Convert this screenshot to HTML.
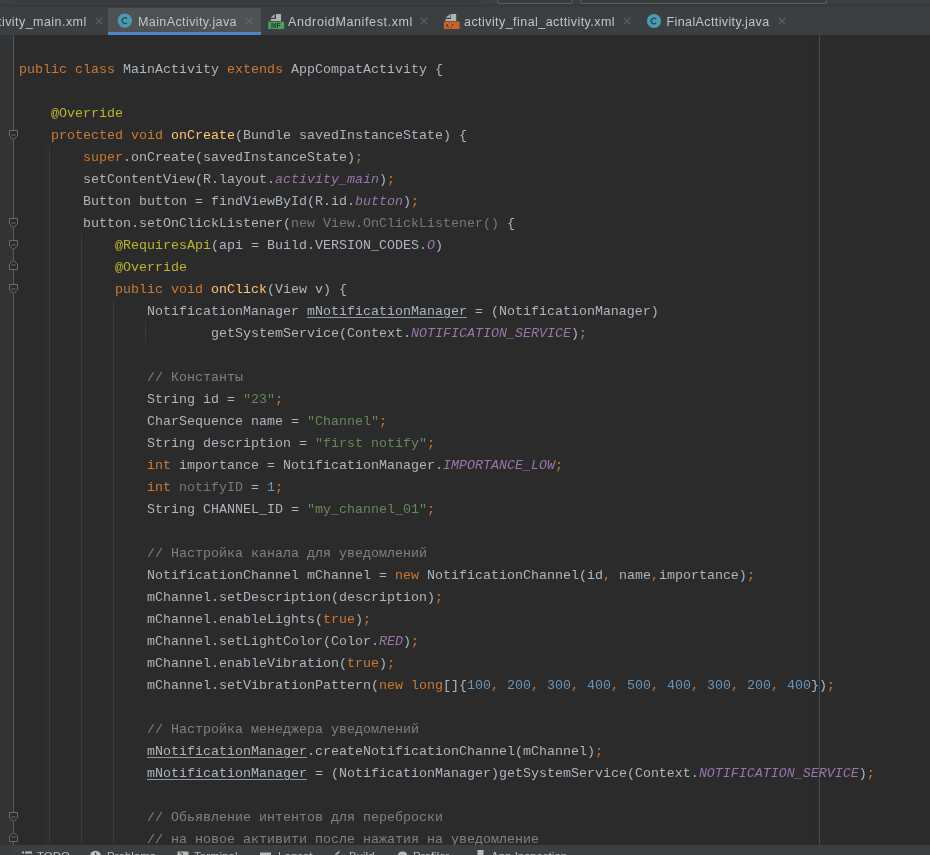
<!DOCTYPE html>
<html><head><meta charset="utf-8">
<style>
html,body{margin:0;padding:0;}
body{width:930px;height:855px;overflow:hidden;position:relative;-webkit-font-smoothing:antialiased;background:#2b2b2b;font-family:"Liberation Sans",sans-serif;}
.abs{position:absolute;}
#topstrip{left:0;top:0;width:930px;height:8px;background:#3c3f41;}
#tabbar{left:0;top:8px;width:930px;height:27px;background:#3c3f41;}
#tabline{left:0;top:34px;width:930px;height:1px;background:#323232;}
.tab{position:absolute;top:8px;height:27px;}
.tab.active{background:#4e5254;}
.tt{position:absolute;top:14.5px;font-size:12.5px;color:#c4c4c4;white-space:pre;line-height:14px;}
.x{position:absolute;top:17px;width:7px;height:7px;}
#gutter{left:0;top:35px;width:13px;height:810px;background:#313335;}
.vl{position:absolute;width:1px;}
.ln{position:absolute;left:19px;height:22px;line-height:22px;font-family:"Liberation Mono",monospace;font-size:13.333px;white-space:pre;color:#adb5be;}
.k{color:#cc7832}.a{color:#bbb529}.f{color:#ffc66d}.d{color:#adb5be}.s{color:#6a8759}.n{color:#6897bb}.c{color:#808080}.p{color:#9876aa;font-style:italic}.g{color:#787878}.u{color:#adb5be;text-decoration:underline;text-decoration-color:#8f979f;text-underline-offset:2px;}
#bottombar{left:0;top:845px;width:930px;height:10px;background:#3c3f41;}
.bt{position:absolute;top:849px;font-size:11.5px;color:#bbbbbb;white-space:pre;line-height:14px;}
.fold{position:absolute;left:9px;width:9px;height:10px;}
</style></head><body><div id="root" style="position:absolute;left:0;top:0;width:930px;height:855px;overflow:hidden;will-change:transform;">
<div id="topstrip" class="abs"></div>
<div class="abs" style="left:497px;top:-7px;width:76px;height:11px;border:1px solid #5a5c5e;border-radius:2px;box-sizing:border-box;"></div>
<div class="abs" style="left:580px;top:-7px;width:247px;height:11px;border:1px solid #5a5c5e;border-radius:2px;box-sizing:border-box;"></div>
<div class="abs" style="left:13px;top:0;width:470px;height:3px;background:#383a3c;"></div>
<div class="abs" style="left:500px;top:0;width:70px;height:3px;background:#393b3d;"></div>
<div class="abs" style="left:584px;top:0;width:240px;height:3px;background:#393b3d;"></div>
<div class="abs" style="left:0;top:4px;width:930px;height:3px;background:#37393b;"></div>
<div id="tabbar" class="abs"></div>
<!-- tabs -->
<div class="tab active" style="left:108px;width:153px;"></div>
<div class="abs" style="left:108px;top:32px;width:153px;height:3px;background:#4a88c7;"></div>
<div class="tt" style="left:-2px;letter-spacing:0.45px">tivity_main.xml</div>
<div class="tt" style="left:138px;letter-spacing:0.4px">MainActivity.java</div>
<div class="tt" style="left:288px;letter-spacing:0.62px">AndroidManifest.xml</div>
<div class="tt" style="left:464px;letter-spacing:0.44px">activity_final_acttivity.xml</div>
<div class="tt" style="left:666.5px;letter-spacing:0.39px">FinalActtivity.java</div>
<svg class="abs" style="left:94.5px;top:16.8px" width="8" height="8" viewBox="0 0 8 8"><path d="M0.6 0.6L7.4 7.4M7.4 0.6L0.6 7.4" stroke="#5e6062" stroke-width="1.15"/></svg>
<svg class="abs" style="left:245px;top:16.8px" width="8" height="8" viewBox="0 0 8 8"><path d="M0.6 0.6L7.4 7.4M7.4 0.6L0.6 7.4" stroke="#66686a" stroke-width="1.15"/></svg>
<svg class="abs" style="left:420px;top:16.8px" width="8" height="8" viewBox="0 0 8 8"><path d="M0.6 0.6L7.4 7.4M7.4 0.6L0.6 7.4" stroke="#5e6062" stroke-width="1.15"/></svg>
<svg class="abs" style="left:623px;top:16.8px" width="8" height="8" viewBox="0 0 8 8"><path d="M0.6 0.6L7.4 7.4M7.4 0.6L0.6 7.4" stroke="#5e6062" stroke-width="1.15"/></svg>
<svg class="abs" style="left:777.5px;top:16.8px" width="8" height="8" viewBox="0 0 8 8"><path d="M0.6 0.6L7.4 7.4M7.4 0.6L0.6 7.4" stroke="#5e6062" stroke-width="1.15"/></svg>
<!-- C icons -->
<svg class="abs" style="left:117px;top:13px" width="16" height="16" viewBox="0 0 16 16"><circle cx="7.9" cy="7.6" r="7.2" fill="#4a9ab0"/><path d="M10 5.6A2.8 2.9 0 1 0 10 9.6" fill="none" stroke="#264a5c" stroke-width="1.3"/></svg>
<svg class="abs" style="left:646px;top:13px" width="16" height="16" viewBox="0 0 16 16"><circle cx="8" cy="8" r="7.1" fill="#4a9ab0"/><path d="M10.1 6A2.8 2.9 0 1 0 10.1 10" fill="none" stroke="#264a5c" stroke-width="1.3"/></svg>
<!-- MF icon -->
<svg class="abs" style="left:268px;top:13px" width="17" height="17" viewBox="0 0 17 17">
<path d="M6.6 0.9V4.8H2.7Z" fill="#aeb2b6"/><path d="M8 0.9H13.05V7.9H2.7V5.95H8Z" fill="#aeb2b6"/>
<rect x="0.2" y="8.7" width="15.9" height="7.3" fill="#4c9d5e"/>
<text x="3" y="14.9" font-family="Liberation Sans" font-weight="bold" font-size="6.6" fill="#1d3a22">MF</text>
</svg>
<!-- XML icon -->
<svg class="abs" style="left:443px;top:13px" width="17" height="17" viewBox="0 0 17 17">
<path d="M7.3 0.9V4.8H2.6Z" fill="#aeb2b6"/><path d="M7.9 0.9H13.2V7.9H2.6V5.95H7.9Z" fill="#aeb2b6"/>
<rect x="0.9" y="8.5" width="15.7" height="7.5" fill="#c7632c"/>
<path d="M5.1 11.3L3.2 12.5L5.6 14.6M9.6 11V12.6M8.2 14.3V14.8" fill="none" stroke="#3a1a0a" stroke-width="0.9"/>
</svg>
<div id="gutter" class="abs"></div>
<div class="vl" style="left:13px;top:35px;height:810px;background:#555759;"></div>
<div class="vl" style="left:46px;top:145px;height:700px;background:#333333;"></div>
<div class="vl" style="left:49px;top:145px;height:700px;background:#393939;"></div>
<div class="vl" style="left:81px;top:233px;height:612px;background:#393939;"></div>
<div class="vl" style="left:113px;top:299px;height:546px;background:#393939;"></div>
<div class="vl" style="left:145px;top:321px;height:22px;background:#393939;"></div>
<div class="vl" style="left:813px;top:35px;height:810px;background:#282828;"></div>
<div class="vl" style="left:819px;top:35px;height:810px;background:#4a4a4a;"></div>
<svg class="fold" style="top:130px" viewBox="0 0 9 10"><path d="M0.5 0.5H8.5V6L4.5 9.5L0.5 6Z" fill="#2b2b2b" stroke="#6a6c6e" stroke-width="1"/><path d="M2.5 5H6.5" stroke="#6a6c6e" stroke-width="1"/></svg>
<svg class="fold" style="top:218px" viewBox="0 0 9 10"><path d="M0.5 0.5H8.5V6L4.5 9.5L0.5 6Z" fill="#2b2b2b" stroke="#6a6c6e" stroke-width="1"/><path d="M2.5 5H6.5" stroke="#6a6c6e" stroke-width="1"/></svg>
<svg class="fold" style="top:240px" viewBox="0 0 9 10"><path d="M0.5 0.5H8.5V6L4.5 9.5L0.5 6Z" fill="#2b2b2b" stroke="#6a6c6e" stroke-width="1"/><path d="M2.5 5H6.5" stroke="#6a6c6e" stroke-width="1"/></svg>
<svg class="fold" style="top:284px" viewBox="0 0 9 10"><path d="M0.5 0.5H8.5V6L4.5 9.5L0.5 6Z" fill="#2b2b2b" stroke="#6a6c6e" stroke-width="1"/><path d="M2.5 5H6.5" stroke="#6a6c6e" stroke-width="1"/></svg>
<svg class="fold" style="top:812px" viewBox="0 0 9 10"><path d="M0.5 0.5H8.5V6L4.5 9.5L0.5 6Z" fill="#2b2b2b" stroke="#6a6c6e" stroke-width="1"/><path d="M2.5 5H6.5" stroke="#6a6c6e" stroke-width="1"/></svg>
<svg class="fold" style="top:260px" viewBox="0 0 9 10"><path d="M0.5 9.5H8.5V4L4.5 0.5L0.5 4Z" fill="#2b2b2b" stroke="#6a6c6e" stroke-width="1"/><path d="M2.5 5H6.5" stroke="#6a6c6e" stroke-width="1"/></svg>
<svg class="fold" style="top:832px" viewBox="0 0 9 10"><path d="M0.5 9.5H8.5V4L4.5 0.5L0.5 4Z" fill="#2b2b2b" stroke="#6a6c6e" stroke-width="1"/><path d="M2.5 5H6.5" stroke="#6a6c6e" stroke-width="1"/></svg>
<div class="ln" style="top:59px"><span class="k">public class </span><span class="d">MainActivity </span><span class="k">extends </span><span class="d">AppCompatActivity {</span></div>
<div class="ln" style="top:103px"><span class="a">    @Override</span></div>
<div class="ln" style="top:125px"><span class="k">    protected void </span><span class="f">onCreate</span><span class="d">(Bundle savedInstanceState) {</span></div>
<div class="ln" style="top:147px"><span class="k">        super</span><span class="d">.onCreate(savedInstanceState)</span><span class="k">;</span></div>
<div class="ln" style="top:169px"><span class="d">        setContentView(R.layout.</span><span class="p">activity_main</span><span class="d">)</span><span class="k">;</span></div>
<div class="ln" style="top:191px"><span class="d">        Button button = findViewById(R.id.</span><span class="p">button</span><span class="d">)</span><span class="k">;</span></div>
<div class="ln" style="top:213px"><span class="d">        button.setOnClickListener(</span><span class="g">new View.OnClickListener()</span><span class="d"> {</span></div>
<div class="ln" style="top:235px"><span class="a">            @RequiresApi</span><span class="d">(api = Build.VERSION_CODES.</span><span class="p">O</span><span class="d">)</span></div>
<div class="ln" style="top:257px"><span class="a">            @Override</span></div>
<div class="ln" style="top:279px"><span class="k">            public void </span><span class="f">onClick</span><span class="d">(View v) {</span></div>
<div class="ln" style="top:301px"><span class="d">                NotificationManager </span><span class="u">mNotificationManager</span><span class="d"> = (NotificationManager)</span></div>
<div class="ln" style="top:323px"><span class="d">                        getSystemService(Context.</span><span class="p">NOTIFICATION_SERVICE</span><span class="d">)</span><span class="k">;</span></div>
<div class="ln" style="top:367px"><span class="c">                // Константы</span></div>
<div class="ln" style="top:389px"><span class="d">                String id = </span><span class="s">&quot;23&quot;</span><span class="k">;</span></div>
<div class="ln" style="top:411px"><span class="d">                CharSequence name = </span><span class="s">&quot;Channel&quot;</span><span class="k">;</span></div>
<div class="ln" style="top:433px"><span class="d">                String description = </span><span class="s">&quot;first notify&quot;</span><span class="k">;</span></div>
<div class="ln" style="top:455px"><span class="k">                int </span><span class="d">importance = NotificationManager.</span><span class="p">IMPORTANCE_LOW</span><span class="k">;</span></div>
<div class="ln" style="top:477px"><span class="k">                int </span><span class="g">notifyID</span><span class="d"> = </span><span class="n">1</span><span class="k">;</span></div>
<div class="ln" style="top:499px"><span class="d">                String CHANNEL_ID = </span><span class="s">&quot;my_channel_01&quot;</span><span class="k">;</span></div>
<div class="ln" style="top:543px"><span class="c">                // Настройка канала для уведомлений</span></div>
<div class="ln" style="top:565px"><span class="d">                NotificationChannel mChannel = </span><span class="k">new </span><span class="d">NotificationChannel(id</span><span class="k">, </span><span class="d">name</span><span class="k">,</span><span class="d">importance)</span><span class="k">;</span></div>
<div class="ln" style="top:587px"><span class="d">                mChannel.setDescription(description)</span><span class="k">;</span></div>
<div class="ln" style="top:609px"><span class="d">                mChannel.enableLights(</span><span class="k">true</span><span class="d">)</span><span class="k">;</span></div>
<div class="ln" style="top:631px"><span class="d">                mChannel.setLightColor(Color.</span><span class="p">RED</span><span class="d">)</span><span class="k">;</span></div>
<div class="ln" style="top:653px"><span class="d">                mChannel.enableVibration(</span><span class="k">true</span><span class="d">)</span><span class="k">;</span></div>
<div class="ln" style="top:675px"><span class="d">                mChannel.setVibrationPattern(</span><span class="k">new long</span><span class="d">[]{</span><span class="n">100</span><span class="k">, </span><span class="n">200</span><span class="k">, </span><span class="n">300</span><span class="k">, </span><span class="n">400</span><span class="k">, </span><span class="n">500</span><span class="k">, </span><span class="n">400</span><span class="k">, </span><span class="n">300</span><span class="k">, </span><span class="n">200</span><span class="k">, </span><span class="n">400</span><span class="d">})</span><span class="k">;</span></div>
<div class="ln" style="top:719px"><span class="c">                // Настройка менеджера уведомлений</span></div>
<div class="ln" style="top:741px">                <span class="u">mNotificationManager</span><span class="d">.createNotificationChannel(mChannel)</span><span class="k">;</span></div>
<div class="ln" style="top:763px">                <span class="u">mNotificationManager</span><span class="d"> = (NotificationManager)getSystemService(Context.</span><span class="p">NOTIFICATION_SERVICE</span><span class="d">)</span><span class="k">;</span></div>
<div class="ln" style="top:807px"><span class="c">                // Обьявление интентов для переброски</span></div>
<div class="ln" style="top:829px"><span class="c">                // на новое активити после нажатия на уведомление</span></div>
<div id="bottombar" class="abs"></div>
<div class="abs" style="left:0;top:845px;width:12px;height:10px;background:#393b3d;"></div>
<svg class="abs" style="left:20px;top:850px" width="14" height="5"><rect x="2" y="1.5" width="2" height="2" fill="#b4b4b4"/><rect x="5" y="1.5" width="7" height="2" fill="#b4b4b4"/></svg>
<svg class="abs" style="left:89px;top:849px" width="14" height="6"><circle cx="6.5" cy="7" r="5.3" fill="#c2c2c2"/><rect x="5.8" y="3.5" width="1.5" height="3" fill="#3c3f41"/></svg>
<svg class="abs" style="left:177px;top:850px" width="13" height="5"><rect x="0.5" y="1.5" width="11" height="4" fill="#b8b8b8"/><path d="M3 2.5L6 4.5" stroke="#3c3f41" stroke-width="1.2"/></svg>
<svg class="abs" style="left:259px;top:850px" width="13" height="5"><rect x="1" y="2.5" width="11" height="3" fill="#b8b8b8"/></svg>
<svg class="abs" style="left:332px;top:849px" width="10" height="6"><path d="M2 6L5 3.5L8 1.5L6.5 5Z" fill="#b8b8b8"/></svg>
<svg class="abs" style="left:397px;top:850px" width="11" height="5"><path d="M1 5A4.5 3.5 0 0 1 10 5Z" fill="#b8b8b8"/></svg>
<svg class="abs" style="left:476px;top:849px" width="10" height="6"><rect x="1.5" y="1" width="6" height="5" fill="#b8b8b8"/></svg>
<div class="bt" style="left:37px">TODO</div>
<div class="bt" style="left:107px">Problems</div>
<div class="bt" style="left:194px">Terminal</div>
<div class="bt" style="left:278px">Logcat</div>
<div class="bt" style="left:349px">Build</div>
<div class="bt" style="left:413px">Profiler</div>
<div class="bt" style="left:491px">App Inspection</div>
</div></body></html>
